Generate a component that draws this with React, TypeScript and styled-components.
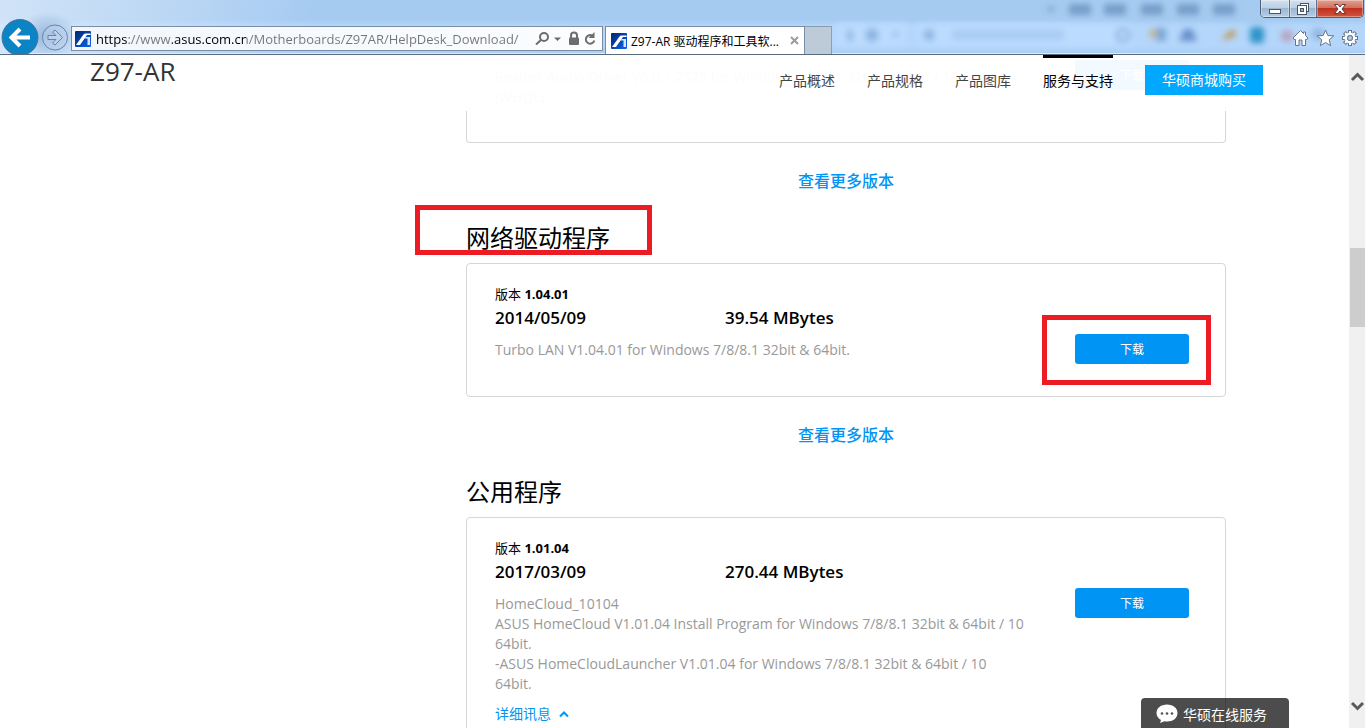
import React from "react";
import styled, { createGlobalStyle } from "styled-components";

const sans = `"Open Sans", "Noto Sans CJK SC", sans-serif`;

const GlobalStyle = createGlobalStyle`
  * { box-sizing: border-box; }
  body { margin: 0; background: #fff; font-family: ${sans}; font-size: 14px; color: #000; }
  button, input { font-family: inherit; }
  a { text-decoration: none; color: inherit; }
  h1, h2, p { margin: 0; font-weight: 400; }
`;

const Window = styled.div`
  display: flex;
  flex-direction: column;
  height: 100vh;
  overflow: hidden;
`;

/* ---------- browser frame ---------- */

const Frame = styled.header`
  position: relative;
  flex: none;
  display: flex;
  align-items: flex-end;
  height: 55px;
  border-bottom: 1px solid #5a6b80;
  box-shadow: inset 0 -1px 0 #dcebfb;
  background:
    radial-gradient(ellipse 30px 24px at 48px 36px, rgba(105, 145, 195, 0.6), transparent),
    linear-gradient(100deg, rgba(226, 237, 250, 0.7) 0, rgba(226, 237, 250, 0.4) 150px, transparent 310px),
    linear-gradient(#a6cbf1 0, #a6cbf1 20px, #b4d6fb 26px, #b4d6fb 46px, #a9cdf4 54px);
`;

const Backdrop = styled.svg`
  position: absolute;
  top: 0;
  right: 0;
`;

const NavButton = styled.button`
  flex: none;
  display: flex;
  padding: 0;
  border: 0;
  background: none;
`;

const AddressBar = styled.div`
  flex: none;
  display: flex;
  align-items: center;
  gap: 4px;
  width: 532px;
  height: 25px;
  margin: 0 2px 3px 3px;
  padding: 0 6px 0 3px;
  border: 1px solid #7b8da5;
  background: linear-gradient(90deg, #f3f7fc, #fbfdff);
`;

const UrlInput = styled.input`
  flex: 1;
  min-width: 0;
  height: 22px;
  padding: 0 0 0 1px;
  border: 0;
  outline: 0;
  font-size: 13px;
  color: transparent;
  background: linear-gradient(
    90deg,
    #000 0, #000 32px,
    #757575 32px, #757575 77px,
    #000 77px, #000 151px,
    #757575 151px
  );
  background-clip: text;
  -webkit-background-clip: text;
`;

const Tab = styled.div`
  position: relative;
  flex: none;
  display: flex;
  align-items: center;
  gap: 4px;
  width: 200px;
  height: 28px;
  padding: 0 5px;
  border: 1px solid #7b8da5;
  border-bottom: 0;
  background: #fff;
  font-size: 12px;
`;

const TabTitle = styled.span`
  flex: 1;
  white-space: nowrap;
`;

const NewTab = styled.button`
  width: 27px;
  height: 28px;
  padding: 0;
  border: 1px solid #8a9bb0;
  border-width: 1px 1px 0 0;
  background: #bdcbd9;
`;

const ToolIcons = styled.div`
  position: relative;
  display: flex;
  gap: 5px;
  margin: 0 5px 6px auto;
`;

const WindowControls = styled.div`
  position: absolute;
  top: 0;
  right: 1px;
  display: flex;
  height: 18px;
  border: 1px solid #4c5f78;
  border-top: 0;
  border-radius: 0 0 5px 5px;
  overflow: hidden;
`;

const ControlButton = styled.button<{ $w: number; $close?: boolean }>`
  display: flex;
  align-items: center;
  justify-content: center;
  width: ${(p) => p.$w}px;
  padding: 0;
  border: 0;
  border-left: ${(p) => (p.$w === 28 ? "0" : "1px solid #5d6f88")};
  background: ${(p) =>
    p.$close
      ? "linear-gradient(#e0a294 0, #d4705c 45%, #bf3220 50%, #d2553c 100%)"
      : "linear-gradient(#d3e0ef 0, #bccfe4 45%, #9db6d0 50%, #b6cde6 100%)"};
  box-shadow: inset 0 0 0 1px rgba(255, 255, 255, 0.35);
`;

/* ---------- page ---------- */

const Body = styled.div`
  flex: 1;
  display: flex;
  min-height: 0;
`;

const Viewport = styled.div`
  position: relative;
  flex: 1;
  min-width: 0;
  overflow: hidden;
`;

const SiteHeader = styled.div`
  position: absolute;
  top: 0;
  left: 0;
  right: 0;
  z-index: 2;
  display: flex;
  justify-content: space-between;
  align-items: flex-start;
  height: 56px;
  padding: 0 86px 0 90px;
  background: rgba(255, 255, 255, 0.95);
`;

const ProductName = styled.h1`
  font-size: 26px;
  line-height: 32px;
  color: #333;
`;

const SiteNav = styled.nav`
  display: flex;
  align-items: flex-start;
  gap: 32px;
`;

const NavLink = styled.a<{ $active?: boolean }>`
  display: flex;
  align-items: center;
  height: 46px;
  border-top: 3px solid ${(p) => (p.$active ? "#000" : "transparent")};
  color: ${(p) => (p.$active ? "#000" : "#444")};
`;

const BuyLink = styled.a`
  width: 118px;
  margin-top: 10px;
  line-height: 30px;
  text-align: center;
  color: #fff;
  background: #00a8ff;
`;

const Main = styled.main`
  padding: 0 123px 0 466px;
`;

const Card = styled.article<{ $scrolled?: boolean }>`
  display: flex;
  justify-content: space-between;
  align-items: flex-start;
  padding: ${(p) => (p.$scrolled ? "5px 36px 35px 28px" : "20px 36px 32px 28px")};
  border: 1px solid #d7d7d7;
  border-top-width: ${(p) => (p.$scrolled ? 0 : 1)}px;
  border-radius: ${(p) => (p.$scrolled ? "0 0 4px 4px" : "4px")};
`;

const Info = styled.div<{ $scrolled?: boolean }>`
  width: 530px;
  padding-top: ${(p) => (p.$scrolled ? 7 : 0)}px;
`;

const Version = styled.p`
  font-size: 13px;
  line-height: 20px;
  b { font-weight: 700; }
`;

const Facts = styled.div`
  display: grid;
  grid-template-columns: 230px 1fr;
  margin-bottom: 8px;
  font-size: 17px;
  font-weight: 600;
  line-height: 28px;
`;

const Description = styled.p<{ $faded?: boolean }>`
  line-height: 20px;
  color: ${(p) => (p.$faded ? "#b5b5b5" : "#999")};
`;

const DetailLink = styled.a`
  display: inline-flex;
  align-items: center;
  gap: 8px;
  margin-top: 10px;
  line-height: 20px;
  color: #0095f5;
`;

const Action = styled.div<{ $scrolled?: boolean }>`
  position: relative;
  margin-top: ${(p) => (p.$scrolled ? 0 : 50)}px;
`;

const DownloadButton = styled.button`
  display: block;
  width: 114px;
  height: 30px;
  padding: 0;
  border: 0;
  border-radius: 3px;
  font-size: 12px;
  color: #fff;
  background: #0095f5;
`;

const MoreLink = styled.a`
  display: block;
  width: max-content;
  margin: 26px auto 27px;
  font-size: 16px;
  font-weight: 500;
  line-height: 24px;
  color: #0095f5;
`;

const SectionTitle = styled.h2`
  position: relative;
  margin-bottom: 7px;
  font-size: 24px;
  line-height: 36px;
`;

const Highlight = styled.span<{ $x: number; $y: number; $w: number; $h: number }>`
  position: absolute;
  left: ${(p) => p.$x}px;
  top: ${(p) => p.$y}px;
  width: ${(p) => p.$w}px;
  height: ${(p) => p.$h}px;
  border: 5px solid #ed1c24;
  pointer-events: none;
`;

const ChatButton = styled.button`
  position: absolute;
  right: 60px;
  bottom: 0;
  z-index: 2;
  display: flex;
  align-items: center;
  gap: 5px;
  width: 148px;
  height: 30px;
  padding: 2px 0 0 15px;
  border: 0;
  border-radius: 4px 4px 0 0;
  font-size: 14px;
  white-space: nowrap;
  color: #fff;
  background: rgba(0, 0, 0, 0.7);
`;

const ScrollRail = styled.div`
  flex: none;
  display: flex;
  flex-direction: column;
  align-items: flex-end;
  width: 16px;
  background: #f0f0f0;
`;

const RailArrow = styled.button`
  display: flex;
  padding: 0;
  border: 0;
  background: none;
`;

const RailThumb = styled.div`
  width: 15px;
  height: 79px;
  margin: 161px 0 auto;
  background: #cdcdcd;
`;

function AsusIcon() {
  return (
    <svg width="16" height="16" viewBox="0 0 16 16" aria-hidden="true">
      <defs>
        <linearGradient id="asus" x1="0" y1="0" x2="1" y2="1">
          <stop offset="0" stopColor="#04266f" />
          <stop offset="0.5" stopColor="#0645ad" />
          <stop offset="1" stopColor="#0a66f0" />
        </linearGradient>
      </defs>
      <rect width="16" height="16" rx="1" fill="url(#asus)" />
      <path d="M1 14L8.500 3.500Q9.300 2.500 10.500 2.500H15.500V4H12L5 14z" fill="#fff" />
      <path d="M10.500 6H15v8h-2.500V7.500H9.500z" fill="#d5e4fb" />
    </svg>
  );
}

function FrameBackdrop() {
  return (
    <Backdrop width="545" height="53" viewBox="820 0 545 53" aria-hidden="true">
      <defs>
        <filter id="glass" x="-20%" y="-50%" width="140%" height="200%">
          <feGaussianBlur stdDeviation="3" />
        </filter>
      </defs>
      <g filter="url(#glass)">
        <rect x="836" y="24" width="70" height="22" fill="#bcdcff" />
        <rect x="918" y="24" width="214" height="22" fill="#bcdcff" />
        <g fill="#46709f" opacity="0.5">
          <path d="M1046 7h10l-5 6z" />
          <rect x="1069" y="4" width="22" height="11" />
          <rect x="1104" y="4" width="22" height="11" />
          <rect x="1141" y="4" width="22" height="11" />
          <rect x="1177" y="4" width="22" height="11" />
          <rect x="1213" y="4" width="22" height="11" />
        </g>
        <g fill="#5f8fc4" opacity="0.5">
          <rect x="847" y="30" width="6" height="11" />
          <circle cx="872" cy="35" r="7" />
          <path d="M891 32h9l-4 6z" />
          <circle cx="929" cy="35" r="6" />
          <rect x="952" y="30" width="112" height="10" opacity="0.4" />
        </g>
        <circle cx="1123" cy="35" r="6" fill="none" stroke="#5f8fc4" strokeWidth="2" />
        <rect x="1156" y="28" width="10" height="13" fill="#7ba6d8" />
        <rect x="1150" y="30" width="7" height="7" fill="#c3b26e" />
        <path d="M1179 41l5-12h8l5 12z" fill="#6790cb" />
        <path d="M1221 40l12-11 3 6-6 3z" fill="#c08f3e" />
        <rect x="1250" y="27" width="14" height="16" rx="3" fill="#2f93c6" />
        <circle cx="1287" cy="36" r="6" fill="#b9a0bd" />
        <circle cx="1318" cy="34" r="6" fill="#90b4dd" />
      </g>
    </Backdrop>
  );
}

const gearTeeth = [0, 45, 90, 135, 180, 225, 270, 315];

function BrowserFrame() {
  return (
    <Frame>
      <FrameBackdrop />
      <NavButton aria-label="后退">
        <svg width="40" height="35" viewBox="0 0 40 35">
          <circle cx="20" cy="18.500" r="18" fill="#0a84c4" stroke="#4a7492" />
          <path d="M30 18.500H12M20 10l-8.500 8.500L20 27" fill="none" stroke="#fff" strokeWidth="4" />
        </svg>
      </NavButton>
      <NavButton aria-label="前进">
        <svg width="28" height="35" viewBox="0 0 28 35">
          <circle cx="15" cy="18.500" r="12.500" fill="rgba(190,212,238,.5)" stroke="#6685a8" />
          <path
            d="M8 16.500h8l-3.500-3.500 2.500-2 7.500 7.500-7.500 7.500-2.500-2 3.500-3.500H8z"
            fill="#bdd3ec"
            stroke="#6685a8"
          />
        </svg>
      </NavButton>
      <AddressBar>
        <AsusIcon />
        <UrlInput
          aria-label="地址"
          defaultValue="https://www.asus.com.cn/Motherboards/Z97AR/HelpDesk_Download/"
        />
        <svg width="61" height="16" viewBox="0 0 61 16" aria-hidden="true">
          <circle cx="9" cy="6" r="4" fill="none" stroke="#6d6d6d" strokeWidth="2" />
          <path d="M6 9L1 13.500" stroke="#6d6d6d" strokeWidth="2" />
          <path d="M19 6.500h7l-3.500 3.500z" fill="#6d6d6d" />
          <rect x="34" y="6.500" width="10" height="7.500" rx="1" fill="#6d6d6d" />
          <path d="M36 7V4.500a3 3 0 0 1 6 0V7" fill="none" stroke="#6d6d6d" strokeWidth="2" />
          <path d="M57.500 4.800A4.300 4.300 0 1 0 59.300 9.500" fill="none" stroke="#6d6d6d" strokeWidth="2" />
          <path d="M59.500 1v6h-6z" fill="#6d6d6d" />
        </svg>
      </AddressBar>
      <Tab>
        <AsusIcon />
        <TabTitle>Z97-AR 驱动程序和工具软...</TabTitle>
        <svg width="9" height="9" viewBox="0 0 9 9" aria-hidden="true">
          <path d="M1 1l7 7M8 1L1 8" stroke="#9c9c9c" strokeWidth="2" />
        </svg>
      </Tab>
      <NewTab aria-label="新标签页" />
      <ToolIcons>
        <NavButton aria-label="主页">
          <svg width="20" height="20" viewBox="0 0 20 20">
            <path
              d="M10.500 2.500L3 10l1 1.500h1.500v6H9V12h3v5.500h3.500v-6H17l1-1.500-2.500-2.500V4h-2v1.500z"
              fill="#fff"
              stroke="#66758a"
            />
          </svg>
        </NavButton>
        <NavButton aria-label="收藏夹">
          <svg width="20" height="20" viewBox="0 0 20 20">
            <path
              d="M10.500 2l2.300 5.500 6 .4-4.600 3.900 1.500 5.900-5.200-3.200-5.200 3.200 1.500-5.900-4.600-3.900 6-.4z"
              fill="#fff"
              stroke="#66758a"
            />
          </svg>
        </NavButton>
        <NavButton aria-label="工具">
          <svg width="20" height="20" viewBox="-10 -10 20 20">
            <g fill="#fff" stroke="#66758a">
              {gearTeeth.map((a) => (
                <rect key={a} x="-1.500" y="-7.500" width="3" height="4.500" transform={`rotate(${a})`} />
              ))}
            </g>
            <circle r="4.200" fill="none" stroke="#fff" strokeWidth="2.500" />
            <circle r="2.500" fill="#a9cdf4" stroke="#66758a" />
          </svg>
        </NavButton>
      </ToolIcons>
      <WindowControls>
        <ControlButton $w={28} aria-label="最小化">
          <svg width="14" height="16" viewBox="0 0 14 16">
            <rect x="1.500" y="8.500" width="11" height="4" fill="#fff" stroke="#4a5568" />
          </svg>
        </ControlButton>
        <ControlButton $w={27} aria-label="还原">
          <svg width="14" height="16" viewBox="0 0 14 16">
            <rect x="4.500" y="2.500" width="8" height="8" fill="#fff" stroke="#4a5568" />
            <rect x="1.500" y="4.500" width="9" height="9" fill="#fff" stroke="#4a5568" />
            <rect x="4.500" y="7.500" width="3" height="3" fill="#9db6d0" stroke="#4a5568" />
          </svg>
        </ControlButton>
        <ControlButton $w={47} $close aria-label="关闭">
          <svg width="14" height="16" viewBox="0 0 14 16">
            <path
              d="M1.500 3.500h3.500L7 6l2-2.500h3.500L9 8l3.500 4.500H9L7 10l-2 2.500H1.500L5 8z"
              fill="#fff"
              stroke="#5a3a40"
            />
          </svg>
        </ControlButton>
      </WindowControls>
    </Frame>
  );
}

type Driver = { version: string; date: string; size: string; lines: string[] };

const lan: Driver = {
  version: "1.04.01",
  date: "2014/05/09",
  size: "39.54 MBytes",
  lines: ["Turbo LAN V1.04.01 for Windows 7/8/8.1 32bit & 64bit."],
};

const utility: Driver = {
  version: "1.01.04",
  date: "2017/03/09",
  size: "270.44 MBytes",
  lines: [
    "HomeCloud_10104",
    "ASUS HomeCloud V1.01.04 Install Program for Windows 7/8/8.1 32bit & 64bit / 10 64bit.",
    "-ASUS HomeCloudLauncher V1.01.04 for Windows 7/8/8.1 32bit & 64bit / 10 64bit.",
  ],
};

function DriverCard({
  driver,
  marked,
  details,
}: {
  driver: Driver;
  marked?: boolean;
  details?: boolean;
}) {
  return (
    <Card>
      <Info>
        <Version>
          版本 <b>{driver.version}</b>
        </Version>
        <Facts>
          <span>{driver.date}</span>
          <span>{driver.size}</span>
        </Facts>
        {driver.lines.map((line) => (
          <Description key={line}>{line}</Description>
        ))}
        {details && (
          <DetailLink href="#details">
            详细讯息
            <svg width="10" height="8" viewBox="0 0 10 8" aria-hidden="true">
              <path d="M1 6.500l4-4 4 4" fill="none" stroke="#0095f5" strokeWidth="2" />
            </svg>
          </DetailLink>
        )}
      </Info>
      <Action>
        <DownloadButton>下载</DownloadButton>
        {marked && <Highlight $x={-33} $y={-19} $w={169} $h={70} />}
      </Action>
    </Card>
  );
}

export default function App() {
  return (
    <Window>
      <GlobalStyle />
      <BrowserFrame />
      <Body>
        <Viewport>
          <SiteHeader>
            <ProductName>Z97-AR</ProductName>
            <SiteNav>
              <NavLink href="#overview">产品概述</NavLink>
              <NavLink href="#specs">产品规格</NavLink>
              <NavLink href="#gallery">产品图库</NavLink>
              <NavLink href="#support" $active>
                服务与支持
              </NavLink>
              <BuyLink href="#buy">华硕商城购买</BuyLink>
            </SiteNav>
          </SiteHeader>
          <Main>
            <Card $scrolled>
              <Info $scrolled>
                <Description $faded>
                  Realtek Audio Driver V6.0.1.7525 for Windows 7/8/8.1 32bit & 64bit / 10 64bit.
                </Description>
                <Description $faded>(WHQL)</Description>
              </Info>
              <Action $scrolled>
                <DownloadButton>下载</DownloadButton>
              </Action>
            </Card>
            <MoreLink href="#audio">查看更多版本</MoreLink>
            <SectionTitle>
              网络驱动程序
              <Highlight $x={-51} $y={-15} $w={237} $h={50} />
            </SectionTitle>
            <DriverCard driver={lan} marked />
            <MoreLink href="#lan">查看更多版本</MoreLink>
            <SectionTitle>公用程序</SectionTitle>
            <DriverCard driver={utility} details />
          </Main>
          <ChatButton>
            <svg width="22" height="20" viewBox="0 0 22 20" aria-hidden="true">
              <path
                d="M11 0.500C5 0.500 0.500 4 0.500 9c0 3 1.800 5.400 4.500 7L4 19l4.500-1.800c.8.200 1.600.300 2.500.300 6 0 10.500-3.500 10.500-8.500S17 .5 11 .5z"
                fill="#fff"
              />
              <g fill="#555">
                <circle cx="6" cy="9.500" r="1.300" />
                <circle cx="11" cy="9.500" r="1.300" />
                <circle cx="16" cy="9.500" r="1.300" />
              </g>
            </svg>
            华硕在线服务
          </ChatButton>
        </Viewport>
        <ScrollRail>
          <RailArrow aria-label="向上滚动">
            <svg width="15" height="32" viewBox="0 0 15 32">
              <path d="M2 25l5.500-5.500L13 25" fill="none" stroke="#5a5a5a" strokeWidth="3" />
            </svg>
          </RailArrow>
          <RailThumb />
          <RailArrow aria-label="向下滚动">
            <svg width="15" height="32" viewBox="0 0 15 32">
              <path d="M2 7l5.500 5.500L13 7" fill="none" stroke="#5a5a5a" strokeWidth="3" />
            </svg>
          </RailArrow>
        </ScrollRail>
      </Body>
    </Window>
  );
}
